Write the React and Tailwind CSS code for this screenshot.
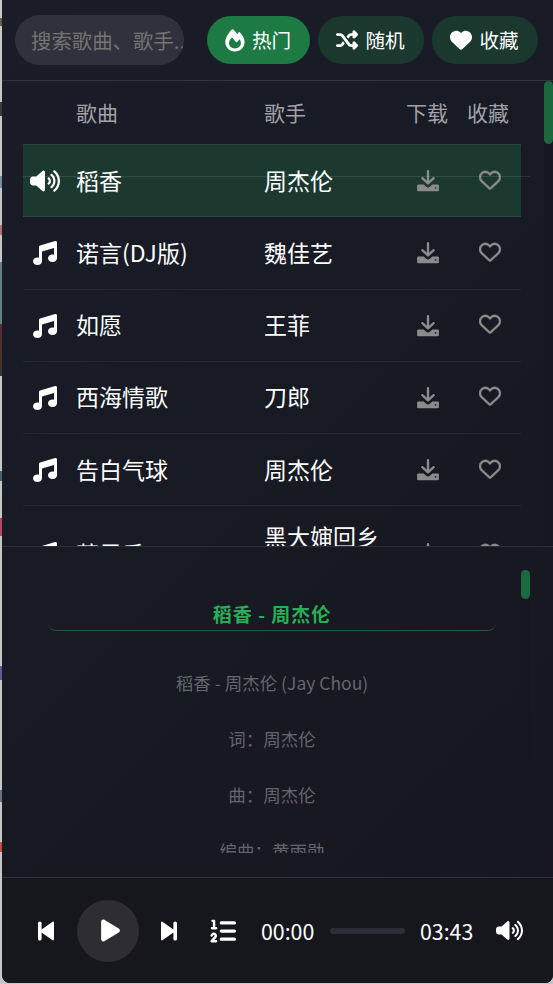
import React from "react";
import {
  FaHeart,
  FaListOl,
  FaMusic,
  FaPlay,
  FaRegHeart,
  FaShuffle,
  FaVolumeHigh,
} from "react-icons/fa6";

const songs = [
  { name: "稻香", singer: "周杰伦", playing: true },
  { name: "诺言(DJ版)", singer: "魏佳艺" },
  { name: "如愿", singer: "王菲" },
  { name: "西海情歌", singer: "刀郎" },
  { name: "告白气球", singer: "周杰伦" },
  { name: "苹果香", singer: "黑大婶回乡创业", tall: true },
];

const lyrics = [
  "稻香 - 周杰伦 (Jay Chou)",
  "词：周杰伦",
  "曲：周杰伦",
  "编曲：黄雨勋",
];

/* ---------------- Icons ---------------- */

const FireIcon = () => (
  <svg width="20" height="23" viewBox="0 0 20 23">
    <path
      fillRule="evenodd"
      fill="currentColor"
      d="M7 .5C7.4 .1 7.9 .1 8.3 .5C9.8 1.9 11.1 3.4 12.2 5L13.6 3.4C14 3 14.6 3 15 3.4C17.6 6 19.6 9.8 19.6 12.8C19.6 18.4 15.4 22.6 9.9 22.6S.3 18.4 .3 12.8C.3 8.9 3.4 4 7 .5ZM6.3 9.2C4.7 11 4 12.6 4 14C4 17.3 6.5 19.4 9.9 19.4S15.9 17.2 15.9 14C15.9 12.7 15.4 11.4 14.6 10.2L12.2 12.9C11.8 13.3 11.2 13.3 10.9 12.9L7.7 9.2C7.3 8.7 6.7 8.7 6.3 9.2Z"
    />
  </svg>
);

const DownloadIcon = () => (
  <svg width="22" height="22" viewBox="0 0 22 22" fill="none">
    <path
      d="M11 1.2V13M5.4 8.2L11 13.4L16.6 8.2"
      stroke="currentColor"
      strokeWidth="2.4"
      strokeLinecap="round"
      strokeLinejoin="round"
    />
    <path
      fillRule="evenodd"
      fill="currentColor"
      d="M1.4 14.4H6.6L9.2 16.7Q11 18.1 12.8 16.7L15.4 14.4H20.6Q21.9 14.4 21.9 15.6V20Q21.9 21.3 20.6 21.3H1.4Q.1 21.3 .1 20V15.6Q.1 14.4 1.4 14.4ZM18.6 16.9A.9 .9 0 1 0 18.6 18.7A.9 .9 0 1 0 18.6 16.9Z"
    />
  </svg>
);

const StepIcon = ({ back }) => (
  <svg
    width="16"
    height="20"
    viewBox="0 0 16 20"
    fill="currentColor"
    className={back ? "-scale-x-100" : ""}
  >
    <path d="M0 2Q0 0 1.8 .9L12.4 8.4V2Q12.4 .4 14.2 .4T16 2V18Q16 19.6 14.2 19.6T12.4 18V11.6L1.8 19.1Q0 20 0 18Z" />
  </svg>
);

/* ---------------- Header ---------------- */

const Pill = ({ icon, label, active, className }) => (
  <button
    className={`flex h-12 items-center justify-center gap-[7px] rounded-full pr-px text-[19.6px] text-white ${
      active ? "bg-[#1d7a43]" : "bg-[#1b382f]"
    } ${className}`}
  >
    {icon}
    <span>{label}</span>
  </button>
);

const Header = () => (
  <div className="flex h-[81px] shrink-0 items-center border-b border-[#32343f] pl-[13px]">
    <div className="h-[50px] w-[169px] overflow-hidden rounded-full bg-[#30313c] pl-4 text-[20.4px] leading-[50px] whitespace-nowrap text-[#747475]">
      搜索歌曲、歌手...
    </div>
    <div className="ml-[23px] flex gap-2">
      <Pill active className="w-[103px]" label="热门" icon={<FireIcon />} />
      <Pill className="w-[106px]" label="随机" icon={<FaShuffle size={22} />} />
      <Pill className="w-[106px]" label="收藏" icon={<FaHeart size={22} />} />
    </div>
  </div>
);

/* ---------------- Song list ---------------- */

const SongRow = ({ song }) => (
  <div
    className={`flex shrink-0 items-center border-b pb-[2px] text-[23px] leading-[34px] text-white ${
      song.tall ? "h-[96px]" : song.playing ? "h-[73.25px]" : "h-[72.25px]"
    } ${
      song.playing
        ? "border-t border-[#2a4640] bg-[#1c392f]"
        : "border-[#242630]"
    }`}
  >
    <div className="flex w-[53px] pl-2">
      {song.playing ? (
        <FaVolumeHigh size={30} className="mt-[2px] -ml-px" />
      ) : (
        <FaMusic size={24} className="mt-[3px] ml-[2px]" />
      )}
    </div>
    <div className="w-[188px]">{song.name}</div>
    <div className="w-[133px] pr-4">{song.singer}</div>
    <div className="flex w-[62px] justify-center pt-[3px] text-[#8b8b8c]">
      <DownloadIcon />
    </div>
    <div className="flex w-[61px] justify-center text-[#8b8b8c]">
      <FaRegHeart size={22} stroke="currentColor" strokeWidth={8} />
    </div>
  </div>
);

const SongList = () => (
  <div className="flex h-[465px] shrink-0 overflow-hidden">
    <div className="relative ml-[21px] flex w-[498px] flex-col">
      <div className="flex h-[63px] shrink-0 items-center pl-[53px] text-[21px] text-[#a2a2a6]">
        <span className="w-[188px]">歌曲</span>
        <span className="w-[142px]">歌手</span>
        <span className="w-[61px]">下载</span>
        <span>收藏</span>
      </div>
      {songs.map((song) => (
        <SongRow key={song.name} song={song} />
      ))}
      <div className="absolute top-[95px] left-0 h-px w-[507px] bg-white/10" />
    </div>
    <div className="ml-auto w-[9px] bg-[#161620]">
      <div className="h-[63px] rounded-full bg-[#1b683c]" />
    </div>
  </div>
);

/* ---------------- Lyrics ---------------- */

const Lyrics = () => (
  <div className="flex h-[332px] shrink-0 border-t border-b border-t-[#2c2e39] border-b-[#303039] pt-[23px] pb-[24px] pl-[21px]">
    <div className="w-[498px] overflow-hidden px-[25px] text-center">
      <div className="mb-[24px] h-[61px] rounded-b-lg border-b border-[#1f5a3c] pt-[30px] text-[19px] leading-[28px] font-bold tracking-[1px] text-[#27ae56]">
        稻香 - 周杰伦
      </div>
      {lyrics.map((line) => (
        <div key={line} className="h-14 text-[17.5px] leading-[56px] text-[#64656e]">
          {line}
        </div>
      ))}
    </div>
    <div className="w-[9px] rounded-full bg-[#161620]">
      <div className="h-[29px] rounded-full bg-[#1b6b3e]" />
    </div>
  </div>
);

/* ---------------- Player ---------------- */

const Player = () => (
  <div className="flex flex-1 items-center bg-[#16161d] pl-9 text-[21.3px] text-white">
    <StepIcon back />
    <div className="ml-[23px] flex size-[62px] items-center justify-center rounded-full bg-[#2d2d33] pl-1">
      <FaPlay size={25} />
    </div>
    <div className="ml-[22px]">
      <StepIcon />
    </div>
    <FaListOl size={26} className="ml-[33px]" />
    <span className="ml-[25px] w-[54px]">00:00</span>
    <div className="ml-[15px] h-[6px] w-[75px] rounded-full bg-[#2d2d37]" />
    <span className="ml-[15px] w-[54px]">03:43</span>
    <FaVolumeHigh size={27} className="ml-[22px]" />
  </div>
);

/* slivers of the page that show beside the panel */
const PageEdge = () => (
  <div className="flex w-[2px] shrink-0 flex-col">
    <div className="h-[18px] bg-[#c6c6c4]" />
    <div className="h-[8px] bg-[#67604c]" />
    <div className="h-[76px]" />
    <div className="h-[14px] bg-[#3c3c3c]" />
    <div className="h-[60px]" />
    <div className="h-[12px] bg-[#7990a0]" />
    <div className="h-[37px]" />
    <div className="h-[10px] bg-[#b66f74]" />
    <div className="h-[27px]" />
    <div className="h-[62px] bg-[#668180]" />
    <div className="h-[52px] bg-gradient-to-b from-[#612b30] to-[#3d3326]" />
    <div className="h-[95px]" />
    <div className="h-[10px] bg-[#49636c]" />
    <div className="h-[37px]" />
    <div className="h-[18px] bg-[#b84b5b]" />
    <div className="h-[130px]" />
    <div className="h-[14px] bg-[#655799]" />
    <div className="h-[110px]" />
    <div className="h-[12px] bg-[#65747d]" />
    <div className="h-[40px]" />
    <div className="h-[10px] bg-[#bd5035]" />
  </div>
);

const App = () => {
  return (
    <div
      lang="zh-CN"
      className="flex h-[984px] w-[553px] overflow-hidden bg-[#c5c6c5] font-['Noto_Sans_CJK_SC',sans-serif]"
    >
      <PageEdge />
      <div className="flex h-[983px] w-[551px] flex-col overflow-hidden rounded-b-lg bg-linear-135 from-[#1a1c28] via-[#171923] to-[#17161e]">
        <Header />
        <SongList />
        <Lyrics />
        <Player />
      </div>
    </div>
  );
};

export default App;
